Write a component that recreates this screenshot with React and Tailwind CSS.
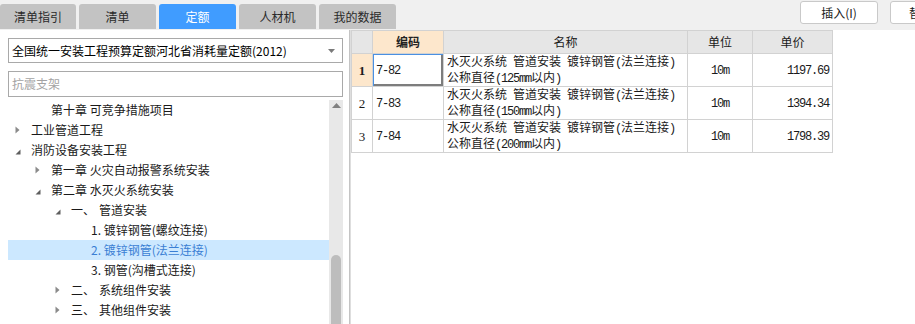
import React from "react";

const tabs = [
  { label: "清单指引", w: "w-[76px]" },
  { label: "清单", w: "w-[77px]" },
  { label: "定额", w: "w-[77px]", active: true },
  { label: "人材机", w: "w-[77px]" },
  { label: "我的数据", w: "w-[77px]" },
];

const levelPad = ["pl-[7px]", "pl-[27px]", "pl-[47px]", "pl-[67px]"];

const tree = [
  { level: 1, text: "第十章 可竞争措施项目" },
  { level: 0, arrow: "right", text: "工业管道工程" },
  { level: 0, arrow: "down", text: "消防设备安装工程" },
  { level: 1, arrow: "right", text: "第一章 火灾自动报警系统安装" },
  { level: 1, arrow: "down", text: "第二章 水灭火系统安装" },
  { level: 2, arrow: "down", prefix: "一、", text: "管道安装" },
  { level: 3, text: "1. 镀锌钢管(螺纹连接)" },
  { level: 3, text: "2. 镀锌钢管(法兰连接)", selected: true },
  { level: 3, text: "3. 钢管(沟槽式连接)" },
  { level: 2, arrow: "right", prefix: "二、", text: "系统组件安装" },
  { level: 2, arrow: "right", prefix: "三、", text: "其他组件安装" },
];

const rows = [
  { n: "1", code: "7-82", l2: "公称直径(125mm以内)", price: "1197.69" },
  { n: "2", code: "7-83", l2: "公称直径(150mm以内)", price: "1394.34" },
  { n: "3", code: "7-84", l2: "公称直径(200mm以内)", price: "1798.39" },
];

function Mix({ s }) {
  const parts = s.split(/([\x00-\x7f]+)/).filter((p) => p.length);
  return (
    <>
      {parts.map((p, i) =>
        /^[\x00-\x7f]+$/.test(p) ? (
          <span
            key={i}
            className="font-['Liberation_Mono',monospace] text-[12px] tracking-[-1.2px] whitespace-pre"
          >
            {p}
          </span>
        ) : (
          <span key={i}>{p}</span>
        )
      )}
    </>
  );
}

function Arrow({ type }) {
  if (type === "right")
    return (
      <svg width="5" height="8" viewBox="0 0 5 8">
        <polygon points="0.5,0.5 4.5,4 0.5,7.5" fill="#8a8a8a" />
      </svg>
    );
  if (type === "down")
    return (
      <svg width="6" height="6" viewBox="0 0 6 6" className="mt-[3px]">
        <polygon points="5.5,0.5 5.5,5.5 0.5,5.5" fill="#5e5e5e" />
      </svg>
    );
  return null;
}

export default function App() {
  return (
    <div className="w-[915px] h-[324px] overflow-hidden bg-white text-[12px] text-[#1a1a1a] font-['Noto_Sans_CJK_SC',sans-serif] leading-none">
      {/* top bar */}
      <div className="h-[30px] bg-[#f0f0f0] flex items-start">
        <div className="flex gap-[3px] pt-[4px] shrink-0">
          {tabs.map((t) => (
            <div
              key={t.label}
              className={`${t.w} h-[25px] rounded-t-[3px] flex items-center justify-center ${
                t.active ? "bg-[#409cff] text-white" : "bg-[#c3c3c3] text-[#2a2a2a]"
              }`}
            >
              {t.label}
            </div>
          ))}
        </div>
        <div className="flex gap-[12px] ml-[404px] pt-[1px] shrink-0">
          <div className="w-[78px] h-[23px] bg-white border border-[#c9c9c9] rounded-[3px] flex items-center justify-center shrink-0">
            插入(I)
          </div>
          <div className="w-[78px] h-[23px] bg-white border border-[#c9c9c9] rounded-[3px] flex items-center pl-[18px] shrink-0">
            替换
          </div>
        </div>
      </div>

      {/* body */}
      <div className="flex h-[294px]">
        {/* left panel */}
        <div className="w-[350px] shrink-0 border-r border-[#c4c4c4] flex flex-col pl-[8px] pr-[6px] pt-[8px]">
          <div className="h-[25px] border border-[#a9a9a9] flex items-center pl-[3px] pr-[7px]">
            <span className="flex-1 text-[12px] text-black">全国统一安装工程预算定额河北省消耗量定额(2012)</span>
            <svg width="7" height="4" viewBox="0 0 7 4">
              <polygon points="0,0 7,0 3.5,4" fill="#7a7a7a" />
            </svg>
          </div>
          <div className="h-[26px] mt-[8px] border border-[#a9a9a9] flex items-center pl-[3px] text-[#a3a3a3]">
            抗震支架
          </div>
          <div className="flex flex-1 mt-[3px] min-h-0">
            <div className="flex-1 flex flex-col">
              {tree.map((r, i) => (
                <div
                  key={i}
                  className={`h-[20px] shrink-0 flex items-center ${levelPad[r.level]} ${
                    r.selected ? "bg-[#cce8ff] text-[#3b7fd4]" : ""
                  }`}
                >
                  <div className="w-[16px] flex items-center">
                    <Arrow type={r.arrow} />
                  </div>
                  {r.prefix && <span className="mr-[4px]">{r.prefix}</span>}
                  <span className="whitespace-pre">{r.text}</span>
                </div>
              ))}
            </div>
            <div className="w-[14px] bg-[#e8e8e8] flex flex-col items-center shrink-0">
              <svg width="9" height="5" viewBox="0 0 9 5" className="mt-[3px]">
                <polygon points="4.5,0 9,5 0,5" fill="#808080" />
              </svg>
              <div className="h-[147px] shrink-0" />
              <div className="w-[10px] flex-1 bg-[#bdbdbd] rounded-t-[5px]" />
            </div>
          </div>
        </div>

        {/* right panel */}
        <div className="flex-1 border-l border-[#dedede]">
          <table className="table-fixed border-collapse w-[481px] text-[12px]">
            <colgroup>
              <col className="w-[21px]" />
              <col className="w-[71px]" />
              <col className="w-[244px]" />
              <col className="w-[65px]" />
              <col className="w-[80px]" />
            </colgroup>
            <thead>
              <tr className="h-[23px]">
                <th className="border border-[#d2d2d2] bg-[#e6e6e6]"></th>
                <th className="border border-[#d2d2d2] bg-[#fde7cc] font-bold text-[#222]">编码</th>
                <th className="border border-[#d2d2d2] bg-[#e6e6e6] font-normal">名称</th>
                <th className="border border-[#d2d2d2] bg-[#e6e6e6] font-normal">单位</th>
                <th className="border border-[#d2d2d2] bg-[#e6e6e6] font-normal">单价</th>
              </tr>
            </thead>
            <tbody>
              {rows.map((r, i) => (
                <tr key={r.n} className="h-[33px]">
                  <td
                    className={`border border-[#d2d2d2] text-center font-['Liberation_Serif',serif] text-[13px] ${
                      i === 0 ? "bg-[#fde7cc] font-bold" : ""
                    }`}
                  >
                    {r.n}
                  </td>
                  <td
                    className={`border border-[#d2d2d2] pl-[3px] ${
                      i === 0 ? "shadow-[inset_1px_1px_0_#4a90e2,inset_-2px_-2px_0_#7d7d7d]" : ""
                    }`}
                  >
                    <Mix s={r.code} />
                  </td>
                  <td className="border border-[#d2d2d2] pl-[3px] leading-[14px]">
                    <div>
                      <Mix s="水灭火系统 管道安装 镀锌钢管(法兰连接)" />
                    </div>
                    <div>
                      <Mix s={r.l2} />
                    </div>
                  </td>
                  <td className="border border-[#d2d2d2] text-center">
                    <Mix s="10m" />
                  </td>
                  <td className="border border-[#d2d2d2] text-right pr-[3px]">
                    <Mix s={r.price} />
                  </td>
                </tr>
              ))}
            </tbody>
          </table>
        </div>
      </div>
    </div>
  );
}
